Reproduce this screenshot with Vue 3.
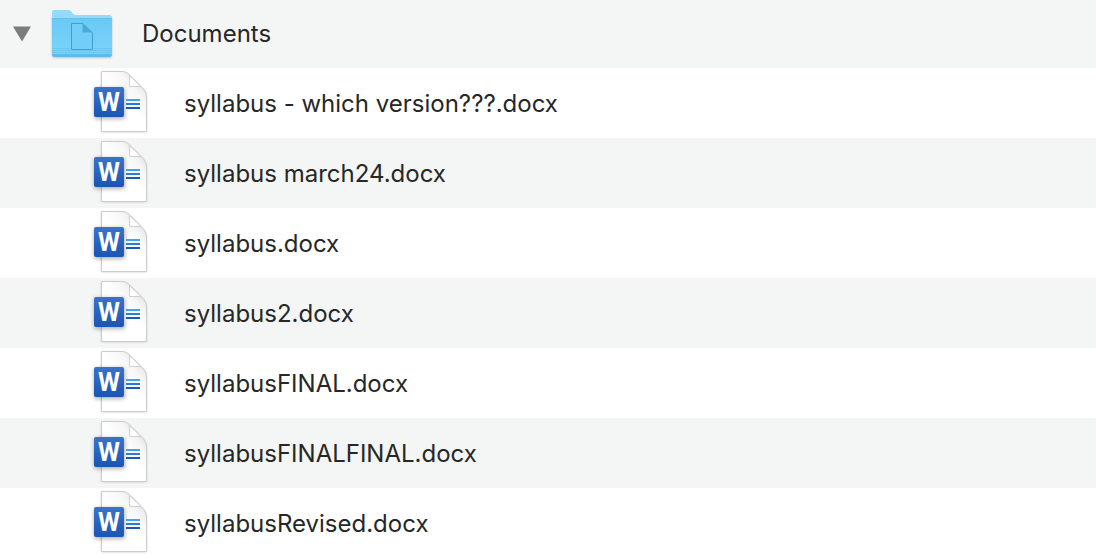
<script setup>
import { ref } from 'vue'

const open = ref(true)
const files = [
  'syllabus - which version???.docx',
  'syllabus march24.docx',
  'syllabus.docx',
  'syllabus2.docx',
  'syllabusFINAL.docx',
  'syllabusFINALFINAL.docx',
  'syllabusRevised.docx',
]
</script>

<template>
  <main class="browser">
    <svg class="defs" width="0" height="0" aria-hidden="true">
      <defs>
        <linearGradient id="folder-front" x1="0" y1="0" x2="0" y2="1">
          <stop offset="0" stop-color="#69c9f6" />
          <stop offset="1" stop-color="#7dd4fa" />
        </linearGradient>
        <linearGradient id="word-blue" x1="0" y1="0" x2="0" y2="1">
          <stop offset="0" stop-color="#3a73c9" />
          <stop offset="1" stop-color="#1b55b4" />
        </linearGradient>
        <linearGradient id="paper" x1="1" y1="0" x2="0.55" y2="0.5">
          <stop offset="0.2" stop-color="#dcdcdc" />
          <stop offset="0.6" stop-color="#f6f6f6" />
          <stop offset="1" stop-color="#ffffff" />
        </linearGradient>
        <symbol id="word-file" viewBox="0 0 60 70">
          <path class="paper-shadow" d="M11.500 4.500H32C37 4.500 39 7 42 10L50 18C54 22 56.500 24 56.500 31V64H11.500Z" />
          <path class="paper" d="M11.500 3.500H32C37 3.500 39 6.500 42 9.500L50 17.500C54 21.500 56.500 24 56.500 30V63.500H11.500Z" />
          <path class="fold-face" d="M39.500 7.500V18.500H51Z" />
          <rect class="tile-shadow" x="4" y="20" width="31" height="31" rx="2" />
          <rect x="4" y="19" width="30" height="30" rx="2" fill="url(#word-blue)" />
          <text class="letter" x="19" y="43" text-anchor="middle">W</text>
          <rect x="36" y="31" width="14" height="2" fill="#41a5ee" />
          <rect x="36" y="35" width="14" height="2" fill="#2b7cd3" />
          <rect x="36" y="39" width="14" height="2" fill="#185abd" />
        </symbol>
      </defs>
    </svg>

    <div class="row folder">
      <button
        class="toggle"
        type="button"
        aria-label="Documents"
        aria-controls="documents-files"
        :aria-expanded="open"
        @click="open = !open"
      >
        <svg :class="{ closed: !open }" width="18" height="16" viewBox="0 0 18 16" aria-hidden="true">
          <path d="M0 0.500H18L9 15.500Z" fill="#7b7c7c" />
        </svg>
      </button>
      <svg class="folder-icon" width="64" height="52" viewBox="0 0 64 52" aria-hidden="true">
        <path class="folder-shadow" d="M2 9H62V47Q62 50 59 50H5Q2 50 2 47Z" />
        <path d="M2 4Q2 2 4 2H18C22 2 22 7 26 7H59Q62 7 62 10V46H2Z" fill="#93dbfa" />
        <path d="M2 10H62V46Q62 49 59 49H5Q2 49 2 46Z" fill="url(#folder-front)" />
        <path d="M2 10.500H62" stroke="#62c1ee" />
        <path d="M2 40.500H62M2 42.500H62M2 44.500H62" stroke="#61bfe9" opacity="0.6" />
        <path d="M2 46H62Q62 49 59 49H5Q2 49 2 46Z" fill="#5cbbe8" />
        <path d="M21.500 15.500H33L42.500 25V41.500H21.500Z" fill="#70cef8" stroke="#429fcc" />
        <path d="M32.500 15.500V24.500H42.500Z" fill="#4aa9d7" />
      </svg>
      <span class="folder-name">Documents</span>
    </div>

    <ul v-show="open" id="documents-files" class="files">
      <li v-for="name in files" :key="name" class="row file">
        <svg class="file-icon" width="60" height="70" aria-hidden="true"><use href="#word-file" /></svg>
        <span class="file-name">{{ name }}</span>
      </li>
    </ul>
  </main>
</template>

<style>
body {
  margin: 0;
  background: #fff;
}
</style>

<style scoped>
.browser {
  font-family: Inter, "Liberation Sans", sans-serif;
  font-size: 24px;
  line-height: 30px;
  color: #262727;
}
.defs {
  display: block;
}
.row {
  display: flex;
  align-items: center;
  white-space: nowrap;
}
.folder {
  height: 68px;
  padding-left: 13px;
  background: #f4f5f5;
}
.toggle {
  display: flex;
  padding: 0;
  border: 0;
  background: none;
}
.closed {
  transform: rotate(-90deg);
}
.folder-icon {
  margin-left: 19px;
}
.folder-name {
  margin-left: 28px;
}
.files {
  margin: 0;
  padding: 0;
  list-style: none;
}
.file {
  height: 70px;
  padding-left: 90px;
}
.file:nth-child(even) {
  background: #f4f5f5;
}
.file-name {
  margin-left: 34px;
  padding-top: 2px;
}
.folder-shadow {
  fill: #b9c4c9;
  filter: blur(1px);
}
.paper {
  fill: url(#paper);
  stroke: #cccccc;
}
.paper-shadow {
  fill: #c4c4c4;
  filter: blur(1px);
}
.fold-face {
  fill: #fff;
  stroke: #d0d0d0;
}
.tile-shadow {
  fill: #000;
  opacity: 0.3;
  filter: blur(2px);
}
.letter {
  fill: #fff;
  font: 700 25px Roboto, sans-serif;
}
</style>
